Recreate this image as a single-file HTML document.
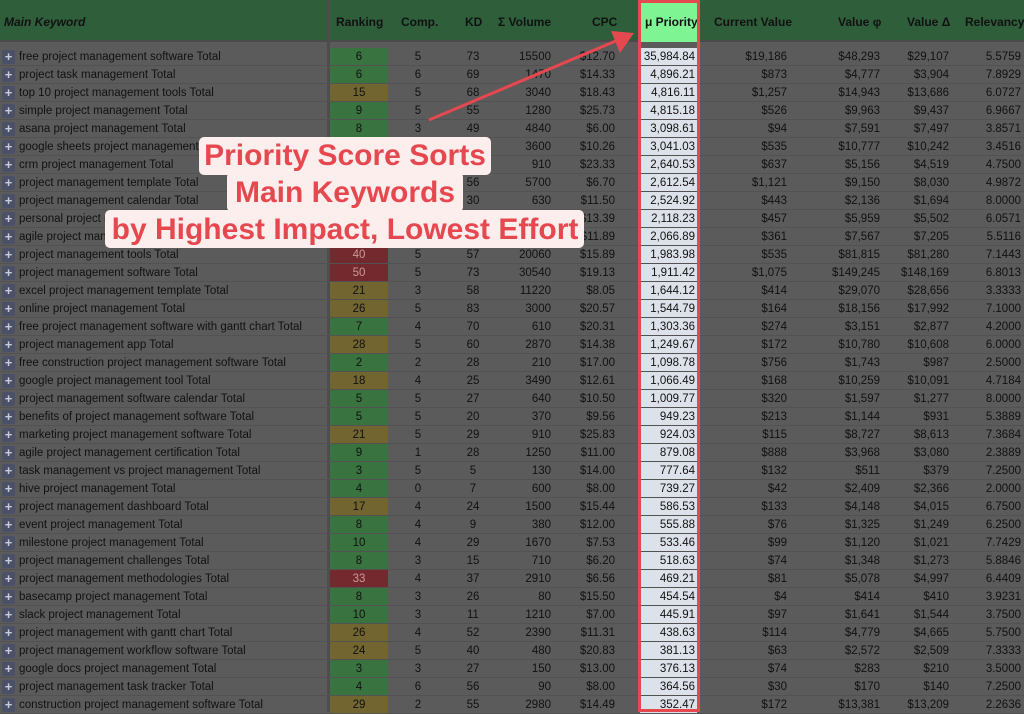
<!DOCTYPE html>
<html><head><meta charset="utf-8"><style>
*{margin:0;padding:0;box-sizing:border-box}
body{width:1024px;height:712px;overflow:hidden;background:#5b5b5b;font-family:"Liberation Sans",sans-serif;font-size:11.5px;color:#111;position:relative}
.hd{position:absolute;top:0;left:0;width:1024px;height:42px;background:#2f5e3b;border-bottom:2px solid #4a4a4a}
.hd span{position:absolute;top:15px;font-weight:bold;font-size:12px}
.vd{position:absolute;left:327px;top:0;width:3px;height:712px;background:#4d4d4d}
.r{position:absolute;left:0;width:1024px;height:18px;border-bottom:1px solid #525252}
.r span{position:absolute;top:0;height:17px;line-height:18px;white-space:nowrap}
.r span:nth-child(1){left:2px;top:2px;width:13px;height:14px;background:#4a5068;border-radius:2px;color:#c8cbd6;text-align:center;line-height:14px;font-weight:bold;font-size:13px}
.r span:nth-child(2){left:19px}
.r span:nth-child(3){left:330px;width:58px;text-align:center}
.r span:nth-child(4){left:398px;width:40px;text-align:center}
.r span:nth-child(5){left:453px;width:40px;text-align:center}
.r span:nth-child(6){left:481px;width:70px;text-align:right}
.r span:nth-child(7){left:545px;width:70px;text-align:right}
.r span:nth-child(8){left:640px;width:57px;text-align:right;background:#dde2ea;padding-right:2px}
.r span:nth-child(9){left:697px;width:90px;text-align:right}
.r span:nth-child(10){left:790px;width:90px;text-align:right}
.r span:nth-child(11){left:870px;width:79px;text-align:right}
.r span:nth-child(12){left:950px;width:71px;text-align:right}
.g{background:#387340}.y{background:#726530}.d{background:#74292e;color:#c99 !important}
.ov{position:absolute;background:#fdeeee;border-radius:5px}
.ot{position:absolute;left:0;width:690px;text-align:center;color:#e5484f;font-weight:bold;font-size:30px;line-height:37px}
</style></head><body>
<div class="hd">
<span style="left:4px;font-style:italic">Main Keyword</span>
<span style="left:336px">Ranking</span>
<span style="left:401px">Comp.</span>
<span style="left:465px">KD</span>
<span style="left:498px">Σ Volume</span>
<span style="left:592px">CPC</span>
<span style="left:714px">Current Value</span>
<span style="left:838px">Value φ</span>
<span style="left:907px">Value Δ</span>
<span style="left:965px">Relevancy</span>
</div>
<div style="position:absolute;left:640px;top:0;width:58px;height:42px;background:#7ef592"></div>
<div style="position:absolute;left:645px;top:15px;font-weight:bold;font-size:12px">μ Priority</div>
<div class="vd"></div>
<div style="position:absolute;top:48px;left:0">
<div class="r" style="top:0"><span>+</span><span>free project management software Total</span><span class="g">6</span><span>5</span><span>73</span><span>15500</span><span>$12.70</span><span>35,984.84</span><span>$19,186</span><span>$48,293</span><span>$29,107</span><span>5.5759</span></div>
<div class="r" style="top:18px"><span>+</span><span>project task management Total</span><span class="g">6</span><span>6</span><span>69</span><span>1470</span><span>$14.33</span><span>4,896.21</span><span>$873</span><span>$4,777</span><span>$3,904</span><span>7.8929</span></div>
<div class="r" style="top:36px"><span>+</span><span>top 10 project management tools Total</span><span class="y">15</span><span>5</span><span>68</span><span>3040</span><span>$18.43</span><span>4,816.11</span><span>$1,257</span><span>$14,943</span><span>$13,686</span><span>6.0727</span></div>
<div class="r" style="top:54px"><span>+</span><span>simple project management Total</span><span class="g">9</span><span>5</span><span>55</span><span>1280</span><span>$25.73</span><span>4,815.18</span><span>$526</span><span>$9,963</span><span>$9,437</span><span>6.9667</span></div>
<div class="r" style="top:72px"><span>+</span><span>asana project management Total</span><span class="g">8</span><span>3</span><span>49</span><span>4840</span><span>$6.00</span><span>3,098.61</span><span>$94</span><span>$7,591</span><span>$7,497</span><span>3.8571</span></div>
<div class="r" style="top:90px"><span>+</span><span>google sheets project management Total</span><span class="g">5</span><span>4</span><span>43</span><span>3600</span><span>$10.26</span><span>3,041.03</span><span>$535</span><span>$10,777</span><span>$10,242</span><span>3.4516</span></div>
<div class="r" style="top:108px"><span>+</span><span>crm project management Total</span><span class="g">7</span><span>4</span><span>40</span><span>910</span><span>$23.33</span><span>2,640.53</span><span>$637</span><span>$5,156</span><span>$4,519</span><span>4.7500</span></div>
<div class="r" style="top:126px"><span>+</span><span>project management template Total</span><span class="y">20</span><span>4</span><span>56</span><span>5700</span><span>$6.70</span><span>2,612.54</span><span>$1,121</span><span>$9,150</span><span>$8,030</span><span>4.9872</span></div>
<div class="r" style="top:144px"><span>+</span><span>project management calendar Total</span><span class="g">6</span><span>4</span><span>30</span><span>630</span><span>$11.50</span><span>2,524.92</span><span>$443</span><span>$2,136</span><span>$1,694</span><span>8.0000</span></div>
<div class="r" style="top:162px"><span>+</span><span>personal project management Total</span><span class="g">9</span><span>4</span><span>35</span><span>880</span><span>$13.39</span><span>2,118.23</span><span>$457</span><span>$5,959</span><span>$5,502</span><span>6.0571</span></div>
<div class="r" style="top:180px"><span>+</span><span>agile project management Total</span><span class="y">19</span><span>5</span><span>60</span><span>2400</span><span>$11.89</span><span>2,066.89</span><span>$361</span><span>$7,567</span><span>$7,205</span><span>5.5116</span></div>
<div class="r" style="top:198px"><span>+</span><span>project management tools Total</span><span class="d">40</span><span>5</span><span>57</span><span>20060</span><span>$15.89</span><span>1,983.98</span><span>$535</span><span>$81,815</span><span>$81,280</span><span>7.1443</span></div>
<div class="r" style="top:216px"><span>+</span><span>project management software Total</span><span class="d">50</span><span>5</span><span>73</span><span>30540</span><span>$19.13</span><span>1,911.42</span><span>$1,075</span><span>$149,245</span><span>$148,169</span><span>6.8013</span></div>
<div class="r" style="top:234px"><span>+</span><span>excel project management template Total</span><span class="y">21</span><span>3</span><span>58</span><span>11220</span><span>$8.05</span><span>1,644.12</span><span>$414</span><span>$29,070</span><span>$28,656</span><span>3.3333</span></div>
<div class="r" style="top:252px"><span>+</span><span>online project management Total</span><span class="y">26</span><span>5</span><span>83</span><span>3000</span><span>$20.57</span><span>1,544.79</span><span>$164</span><span>$18,156</span><span>$17,992</span><span>7.1000</span></div>
<div class="r" style="top:270px"><span>+</span><span>free project management software with gantt chart Total</span><span class="g">7</span><span>4</span><span>70</span><span>610</span><span>$20.31</span><span>1,303.36</span><span>$274</span><span>$3,151</span><span>$2,877</span><span>4.2000</span></div>
<div class="r" style="top:288px"><span>+</span><span>project management app Total</span><span class="y">28</span><span>5</span><span>60</span><span>2870</span><span>$14.38</span><span>1,249.67</span><span>$172</span><span>$10,780</span><span>$10,608</span><span>6.0000</span></div>
<div class="r" style="top:306px"><span>+</span><span>free construction project management software Total</span><span class="g">2</span><span>2</span><span>28</span><span>210</span><span>$17.00</span><span>1,098.78</span><span>$756</span><span>$1,743</span><span>$987</span><span>2.5000</span></div>
<div class="r" style="top:324px"><span>+</span><span>google project management tool Total</span><span class="y">18</span><span>4</span><span>25</span><span>3490</span><span>$12.61</span><span>1,066.49</span><span>$168</span><span>$10,259</span><span>$10,091</span><span>4.7184</span></div>
<div class="r" style="top:342px"><span>+</span><span>project management software calendar Total</span><span class="g">5</span><span>5</span><span>27</span><span>640</span><span>$10.50</span><span>1,009.77</span><span>$320</span><span>$1,597</span><span>$1,277</span><span>8.0000</span></div>
<div class="r" style="top:360px"><span>+</span><span>benefits of project management software Total</span><span class="g">5</span><span>5</span><span>20</span><span>370</span><span>$9.56</span><span>949.23</span><span>$213</span><span>$1,144</span><span>$931</span><span>5.3889</span></div>
<div class="r" style="top:378px"><span>+</span><span>marketing project management software Total</span><span class="y">21</span><span>5</span><span>29</span><span>910</span><span>$25.83</span><span>924.03</span><span>$115</span><span>$8,727</span><span>$8,613</span><span>7.3684</span></div>
<div class="r" style="top:396px"><span>+</span><span>agile project management certification Total</span><span class="g">9</span><span>1</span><span>28</span><span>1250</span><span>$11.00</span><span>879.08</span><span>$888</span><span>$3,968</span><span>$3,080</span><span>2.3889</span></div>
<div class="r" style="top:414px"><span>+</span><span>task management vs project management Total</span><span class="g">3</span><span>5</span><span>5</span><span>130</span><span>$14.00</span><span>777.64</span><span>$132</span><span>$511</span><span>$379</span><span>7.2500</span></div>
<div class="r" style="top:432px"><span>+</span><span>hive project management Total</span><span class="g">4</span><span>0</span><span>7</span><span>600</span><span>$8.00</span><span>739.27</span><span>$42</span><span>$2,409</span><span>$2,366</span><span>2.0000</span></div>
<div class="r" style="top:450px"><span>+</span><span>project management dashboard Total</span><span class="y">17</span><span>4</span><span>24</span><span>1500</span><span>$15.44</span><span>586.53</span><span>$133</span><span>$4,148</span><span>$4,015</span><span>6.7500</span></div>
<div class="r" style="top:468px"><span>+</span><span>event project management Total</span><span class="g">8</span><span>4</span><span>9</span><span>380</span><span>$12.00</span><span>555.88</span><span>$76</span><span>$1,325</span><span>$1,249</span><span>6.2500</span></div>
<div class="r" style="top:486px"><span>+</span><span>milestone project management Total</span><span class="g">10</span><span>4</span><span>29</span><span>1670</span><span>$7.53</span><span>533.46</span><span>$99</span><span>$1,120</span><span>$1,021</span><span>7.7429</span></div>
<div class="r" style="top:504px"><span>+</span><span>project management challenges Total</span><span class="g">8</span><span>3</span><span>15</span><span>710</span><span>$6.20</span><span>518.63</span><span>$74</span><span>$1,348</span><span>$1,273</span><span>5.8846</span></div>
<div class="r" style="top:522px"><span>+</span><span>project management methodologies Total</span><span class="d">33</span><span>4</span><span>37</span><span>2910</span><span>$6.56</span><span>469.21</span><span>$81</span><span>$5,078</span><span>$4,997</span><span>6.4409</span></div>
<div class="r" style="top:540px"><span>+</span><span>basecamp project management Total</span><span class="g">8</span><span>3</span><span>26</span><span>80</span><span>$15.50</span><span>454.54</span><span>$4</span><span>$414</span><span>$410</span><span>3.9231</span></div>
<div class="r" style="top:558px"><span>+</span><span>slack project management Total</span><span class="g">10</span><span>3</span><span>11</span><span>1210</span><span>$7.00</span><span>445.91</span><span>$97</span><span>$1,641</span><span>$1,544</span><span>3.7500</span></div>
<div class="r" style="top:576px"><span>+</span><span>project management with gantt chart Total</span><span class="y">26</span><span>4</span><span>52</span><span>2390</span><span>$11.31</span><span>438.63</span><span>$114</span><span>$4,779</span><span>$4,665</span><span>5.7500</span></div>
<div class="r" style="top:594px"><span>+</span><span>project management workflow software Total</span><span class="y">24</span><span>5</span><span>40</span><span>480</span><span>$20.83</span><span>381.13</span><span>$63</span><span>$2,572</span><span>$2,509</span><span>7.3333</span></div>
<div class="r" style="top:612px"><span>+</span><span>google docs project management Total</span><span class="g">3</span><span>3</span><span>27</span><span>150</span><span>$13.00</span><span>376.13</span><span>$74</span><span>$283</span><span>$210</span><span>3.5000</span></div>
<div class="r" style="top:630px"><span>+</span><span>project management task tracker Total</span><span class="g">4</span><span>6</span><span>56</span><span>90</span><span>$8.00</span><span>364.56</span><span>$30</span><span>$170</span><span>$140</span><span>7.2500</span></div>
<div class="r" style="top:648px"><span>+</span><span>construction project management software Total</span><span class="y">29</span><span>2</span><span>55</span><span>2980</span><span>$14.49</span><span>352.47</span><span>$172</span><span>$13,381</span><span>$13,209</span><span>2.2636</span></div>
</div>
<div style="position:absolute;left:638px;top:0;width:62px;height:712px;border:3px solid #e5484f"></div>
<svg style="position:absolute;left:0;top:0" width="1024" height="712"><line x1="429" y1="120" x2="618" y2="40" stroke="#e5484f" stroke-width="3"/><polygon points="634,33 611,31 620,53" fill="#e5484f"/></svg>
<div class="ov" style="left:199px;top:137px;width:292px;height:38px"></div>
<div class="ov" style="left:227px;top:172px;width:236px;height:40px"></div>
<div class="ov" style="left:105px;top:210px;width:479px;height:38px"></div>
<div class="ot" style="top:137px">Priority Score Sorts</div>
<div class="ot" style="top:174px">Main Keywords</div>
<div class="ot" style="top:211px">by Highest Impact, Lowest Effort</div>
</body></html>
